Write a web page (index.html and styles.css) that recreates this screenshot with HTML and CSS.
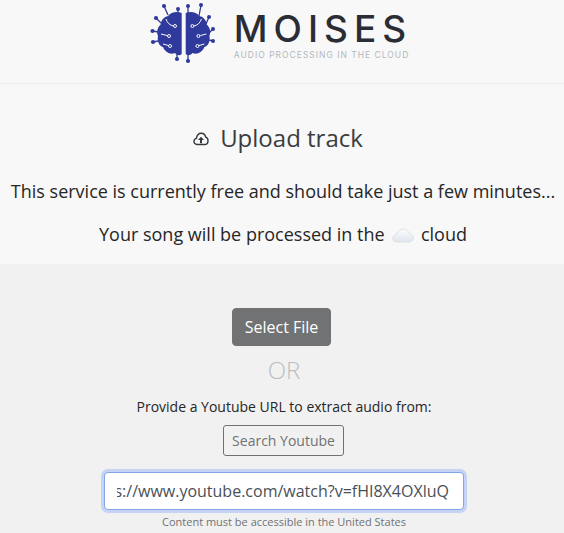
FILE: index.html
```html
<!DOCTYPE html>
<html lang="en">
<head>
<meta charset="utf-8">
<title>Moises</title>
<link rel="stylesheet" href="styles.css">
</head>
<body>
<header class="brand">
  <div class="logo">
    <svg class="brain" width="66" height="64" viewBox="0 0 66 64" aria-hidden="true">
      <g fill="#2f3a9c">
        <path d="M31.700 13C27 11 21 12 18 16 14 17 11 20 11 24 8 27 6 31 8 36 7 41 9 46 13 47 15 52 20 55 25 53 27 56 31.700 56 31.700 53Z"/>
        <path d="M35.700 13C40.400 11 46.400 12 49.400 16 53.400 17 56.400 20 56.400 24 59.400 27 61.400 31 59.400 36 60.400 41 58.400 46 54.400 47 52.400 52 47.400 55 42.400 53 40.400 56 35.700 56 35.700 53Z"/>
        <circle cx="14" cy="6" r="2.100"/><circle cx="28" cy="9" r="2"/><circle cx="38" cy="6" r="2"/><circle cx="51" cy="5" r="2"/>
        <circle cx="6" cy="18" r="2.100"/><circle cx="59" cy="17" r="2"/><circle cx="2.500" cy="31" r="2.100"/><circle cx="63" cy="29" r="2"/>
        <circle cx="3" cy="42" r="2.100"/><circle cx="63" cy="41" r="2"/><circle cx="27" cy="59" r="2.100"/><circle cx="38" cy="61" r="2.100"/>
      </g>
      <g fill="none" stroke="#2f3a9c" stroke-width="1.300">
        <path d="M14 6l4 9M28 9v4M38 6v7M51 5l-2 11M6 18l6 6M59 17l-3 7M2.500 31l6 1M63 29l-4 4M3 42l5-1M63 41l-4-1M27 59v-5M38 61v-8"/>
      </g>
      <g fill="none" stroke="#f8f8f8" stroke-width="1">
        <path d="M16 19q2 6 7.500 7M11 34l6 1.500M13 44l5.500 1.500M51.400 19q-2 6-7.500 7M56.400 34l-6 1.500M54.400 44l-5.500 1.500"/>
        <circle cx="25" cy="26" r="1.500"/><circle cx="42.400" cy="26" r="1.500"/><circle cx="19" cy="36" r="1.500"/><circle cx="48.400" cy="36" r="1.500"/><circle cx="20" cy="46" r="1.500"/><circle cx="47.400" cy="46" r="1.500"/>
      </g>
    </svg>
    <div class="wordmark">
      <div class="wordmark-title">MOISES</div>
      <div class="wordmark-sub">AUDIO PROCESSING IN THE CLOUD</div>
    </div>
  </div>
</header>
<section class="intro">
  <h1 class="title">
    <svg class="upload-icon" width="16" height="14" viewBox="0 0 16 14" aria-hidden="true">
      <path d="M4 12.500C2.200 12.500 1 11.100 1 9.400c0-1.500 1-2.700 2.400-3C3.900 3.300 5.800 1.200 8.200 1.200c2.300 0 4 1.600 4.500 3.900 1.400.4 2.300 1.700 2.300 3.300 0 2.300-1.300 4.100-3.300 4.100z" fill="none" stroke="#343a40" stroke-width="1.400"/>
      <path d="M8 4.800l3 3.200H9v3.300H7V8H5z" fill="#343a40"/>
    </svg>
    <span>Upload track</span>
  </h1>
  <p class="lead">This service is currently free and should take just a few minutes...</p>
  <p class="lead">Your song will be processed in the
    <svg class="cloud" width="22" height="15" viewBox="0 0 22 15" aria-hidden="true">
      <defs>
        <linearGradient id="cloudFill" x1="0" y1="0" x2="0" y2="1">
          <stop offset="0" stop-color="#fbfcfd"/>
          <stop offset="1" stop-color="#dfe6ee"/>
        </linearGradient>
      </defs>
      <path d="M5 14C2.400 14 .8 12.300.8 10.300c0-2 1.500-3.600 3.600-3.800C5.300 3.300 8 1 11.300 1c3 0 5.300 1.900 5.900 4.700 2.400.3 4 2.200 4 4.400 0 2.200-1.700 3.900-4 3.900z" fill="url(#cloudFill)" stroke="#d4dbe2" stroke-width=".8"/>
    </svg>
    cloud</p>
</section>
<main class="panel">
  <button class="select-file" type="button">Select File</button>
  <div class="or">OR</div>
  <p class="provide">Provide a Youtube URL to extract audio from:</p>
  <button class="search" type="button">Search Youtube</button>
  <div class="url-box"><div class="url-clip"><span class="url-text">https://www.youtube.com/watch?v=fHI8X4OXluQ</span></div></div>
  <small class="note">Content must be accessible in the United States</small>
</main>
</body>
</html>
```
FILE: styles.css
```css
* { box-sizing: border-box; }
html, body { margin: 0; height: 100%; overflow: hidden; }
body {
  background: #f1f1f1;
  color: #262626;
  font-family: "Open Sans", sans-serif;
  font-size: 16px;
}
.brand {
  height: 84px;
  background: #f8f8f8;
  border-bottom: 1px solid #ececec;
  display: flex;
  justify-content: center;
}
.logo { display: flex; align-items: flex-start; gap: 18px; margin-left: -2px; }
.brain { display: block; }
.wordmark { padding-top: 9px; }
.wordmark-title {
  font-family: "Inter", sans-serif;
  font-size: 37px;
  line-height: 40px;
  font-weight: 500;
  letter-spacing: 6px;
  color: #2a2d34;
}
.wordmark-sub {
  font-family: "Inter", sans-serif;
  font-size: 8.500px;
  line-height: 10px;
  letter-spacing: 1px;
  color: #b5b7bb;
  margin-top: 1px;
}
.intro {
  height: 180px;
  background: #f8f8f8;
  text-align: center;
  padding-top: 36px;
}
.title {
  margin: 0 0 22px;
  padding-right: 8px;
  font-size: 24px;
  line-height: 36px;
  font-weight: 400;
  color: #3a3d40;
  display: flex;
  justify-content: center;
  align-items: center;
  gap: 11px;
}
.upload-icon { margin-top: 2px; }
.lead { margin: 0 0 16px; padding-left: 2px; line-height: 27px; font-size: 18px; white-space: nowrap; }
.cloud { vertical-align: -2px; margin: 0 2.500px; }
.panel {
  display: flex;
  flex-direction: column;
  align-items: center;
  padding: 44px 0 0 4px;
}
.select-file {
  width: 99px;
  height: 38px;
  margin-left: -5px;
  border: 1px solid #707274;
  border-radius: 4px;
  background: #707274;
  color: #fff;
  font: 400 16px/24px "Open Sans", sans-serif;
  padding: 0;
}
.or {
  font-size: 24px;
  line-height: 36px;
  font-weight: 300;
  color: #bcbec0;
  margin-top: 6px;
}
.provide { margin: 8px 0 8px; font-size: 14px; line-height: 21px; color: #262626; }
.search {
  width: 121px;
  height: 31px;
  margin-left: -1px;
  border: 1px solid #707274;
  border-radius: 3px;
  background: transparent;
  color: #707274;
  font: 400 14px/21px "Open Sans", sans-serif;
  padding: 0;
}
.url-box {
  margin-top: 16px;
  width: 360px;
  height: 38px;
  background: #fff;
  border: 1px solid #80a6e6;
  border-radius: 4px;
  box-shadow: 0 0 0 3px #c5d3f5;
  display: flex;
  align-items: center;
  padding: 0 14px 0 12px;
  font-size: 16px;
  color: #495057;
}
.url-clip {
  flex: 1;
  min-width: 0;
  overflow: hidden;
  display: flex;
  justify-content: flex-end;
  white-space: nowrap;
}
.url-text { flex: none; }
.note { margin-top: 5px; font-size: 11px; line-height: 14px; color: #707274; }
```
